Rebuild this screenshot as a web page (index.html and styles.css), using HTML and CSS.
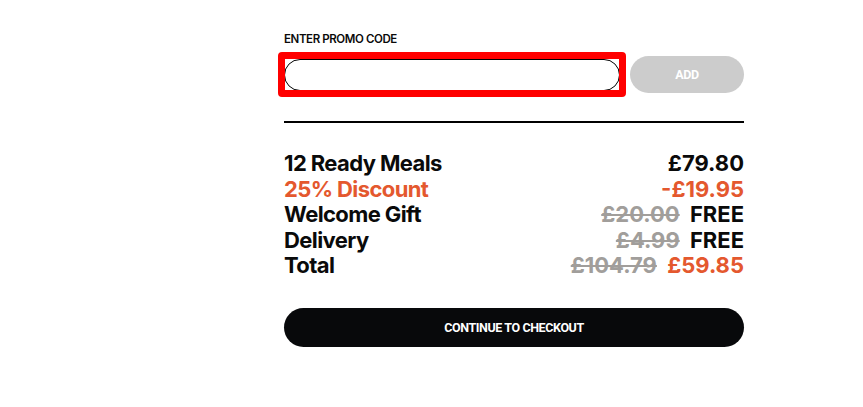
FILE: index.html
```html
<!DOCTYPE html>
<html lang="en">
  <head>
    <meta charset="UTF-8" />
    <meta name="viewport" content="width=device-width, initial-scale=1.0" />
    <title>Checkout summary</title>
    <link rel="stylesheet" href="styles.css">
  </head>
  <body>
    <div class="checkout">
      <label class="promo-label" for="promo">ENTER PROMO CODE</label>
      <div class="promo-row">
        <div class="promo-field">
          <input id="promo" class="promo-input" type="text">
          <span class="focus-ring"></span>
        </div>
        <button class="promo-add" disabled>ADD</button>
      </div>

      <hr class="divider">

      <ul class="summary">
        <li class="summary-row">
          <span>12 Ready Meals</span>
          <span class="prices">£79.80</span>
        </li>
        <li class="summary-row discount">
          <span>25% Discount</span>
          <span class="prices">-£19.95</span>
        </li>
        <li class="summary-row">
          <span>Welcome Gift</span>
          <span class="prices"><s class="was">£20.00</s> FREE</span>
        </li>
        <li class="summary-row">
          <span>Delivery</span>
          <span class="prices"><s class="was">£4.99</s> FREE</span>
        </li>
        <li class="summary-row">
          <span>Total</span>
          <span class="prices"><s class="was">£104.79</s> <span class="now">£59.85</span></span>
        </li>
      </ul>

      <button class="checkout-btn">CONTINUE TO CHECKOUT</button>
    </div>
  </body>
</html>
```

FILE: styles.css
```css
body {
  margin: 0;
  background-color: #fff;
  color: #0a0a0a;
  font-family: Inter, "Liberation Sans", sans-serif;
}

.checkout {
  width: 460px;
  margin-left: 284px;
  padding-top: 31px;
}

.promo-label {
  display: block;
  font-size: 11.5px;
  line-height: 16px;
  font-weight: 600;
  letter-spacing: -0.4px;
}

.promo-row {
  display: flex;
  align-items: center;
  gap: 10px;
  margin-top: 9px;
  height: 37px;
}

.promo-field {
  position: relative;
  flex: 1;
  height: 32px;
}

.promo-input {
  box-sizing: border-box;
  width: 100%;
  height: 100%;
  margin: 0;
  border: 1.5px solid #000;
  border-radius: 16px;
  outline: none;
  background: #fff;
}

.focus-ring {
  position: absolute;
  top: -7px;
  left: -6px;
  right: -6px;
  bottom: -6px;
  border: 7px solid #ff0000;
  border-radius: 4px;
  pointer-events: none;
}

.promo-add {
  width: 114px;
  height: 37px;
  border: none;
  border-radius: 19px;
  background-color: #cccccc;
  color: #fff;
  font-family: Roboto, "Liberation Sans", sans-serif;
  font-size: 12.5px;
  font-weight: 700;
  letter-spacing: -0.4px;
}

.divider {
  margin: 28px 0 0;
  border: none;
  border-top: 2px solid #000;
}

.summary {
  list-style: none;
  margin: 28px 0 0;
  padding: 0;
}

.summary-row {
  display: flex;
  justify-content: space-between;
  font-size: 22px;
  line-height: 25.6px;
  font-weight: 700;
  letter-spacing: -0.6px;
}

.prices {
  letter-spacing: 0;
}

.discount {
  color: #e4582e;
}

.was {
  color: #a19e9b;
  text-decoration-thickness: 2px;
  margin-right: 5px;
}

.now {
  color: #e4582e;
}

.checkout-btn {
  display: block;
  width: 100%;
  height: 39px;
  margin-top: 29px;
  border: none;
  border-radius: 20px;
  background-color: #08090b;
  color: #fff;
  font-family: Roboto, "Liberation Sans", sans-serif;
  font-size: 12.5px;
  font-weight: 700;
  letter-spacing: -0.4px;
}
```
